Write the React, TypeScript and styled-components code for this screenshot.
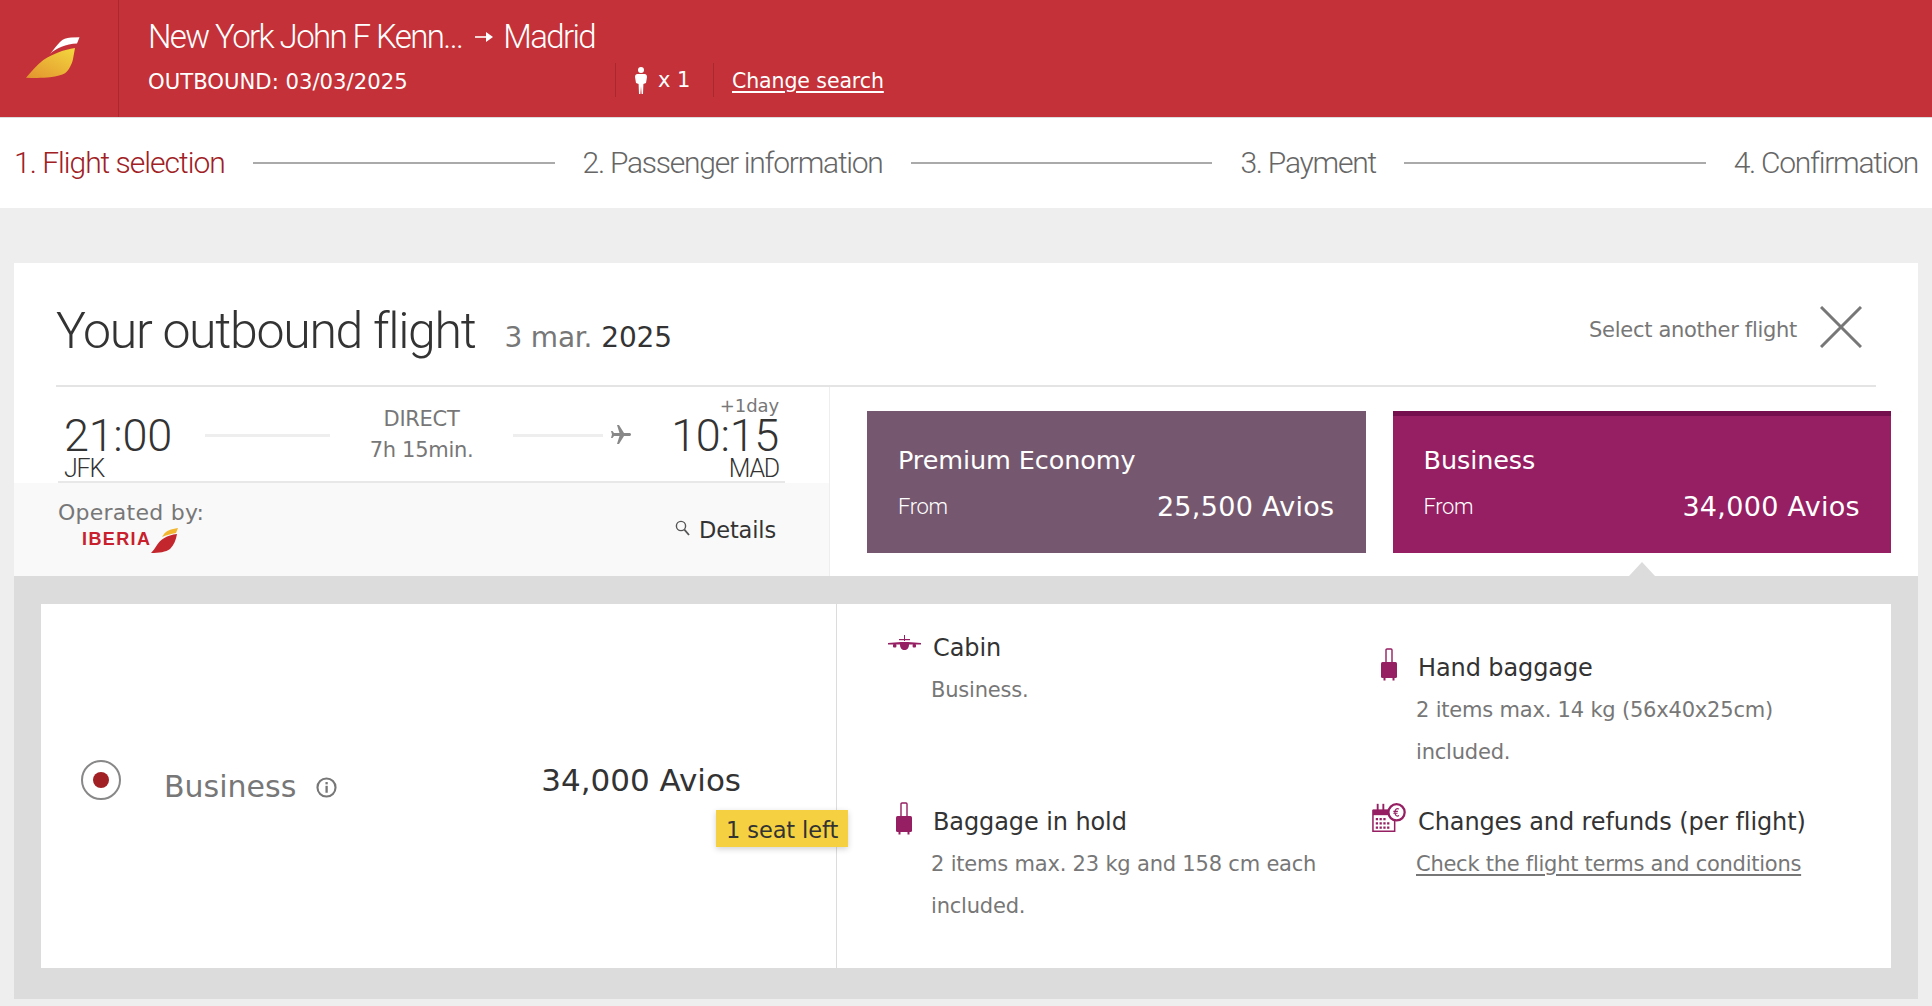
import React from "react";
import styled, { createGlobalStyle } from "styled-components";

const LIGHT = `"Roboto", "Open Sans", sans-serif`;
const VERD = `"DejaVu Sans", "Liberation Sans", sans-serif`;

const Global = createGlobalStyle`
  html, body { margin: 0; padding: 0; background: #eeeeee; }
  body { font-family: ${VERD}; color: #333; height: 1006px; overflow: hidden; }
  * { box-sizing: border-box; }
`;

const Header = styled.header`
  height: 118px;
  background: #c43138;
  display: flex;
  color: #fff;
  box-shadow: inset 0 -1px 0 #ddd;
`;
const LogoCell = styled.div`
  width: 119px;
  flex: none;
  border-right: 1px solid #a8282e;
  margin-bottom: 1px;
  display: flex;
  align-items: center;
  padding: 0 0 1px 26px;
`;
const HeaderInfo = styled.div`
  padding: 18px 0 0 29px;
  display: flex;
  flex-direction: column;
`;
const RouteTitle = styled.div`
  font-family: ${LIGHT};
  font-weight: 300;
  font-size: 33px;
  line-height: 38px;
  letter-spacing: -1.6px;
  white-space: nowrap;
  display: flex;
  align-items: center;
`;
const RouteArrow = styled.svg`
  width: 20px;
  height: 14px;
  margin: 0 9px 0 12px;
`;
const HeaderSub = styled.div`
  display: flex;
  align-items: center;
  margin-top: 8px;
  height: 34px;
`;
const Outbound = styled.div`
  width: 467px;
  font-size: 21.2px;
  white-space: nowrap;
`;
const Pax = styled.div`
  width: 99px;
  height: 34px;
  margin-top: -2px;
  border-left: 1px solid #a8282e;
  border-right: 1px solid #a8282e;
  display: flex;
  align-items: center;
  padding-left: 19px;
  gap: 11px;
  font-size: 21px;
`;
const ChangeLink = styled.a`
  margin-left: 18px;
  font-size: 20.5px;
  letter-spacing: -0.1px;
  color: #fff;
  text-decoration: underline;
  text-underline-offset: 3px;
  white-space: nowrap;
`;

const Steps = styled.nav`
  height: 90px;
  background: #fff;
  display: flex;
  align-items: center;
  padding: 0 14px;
  gap: 28px;
`;
const Step = styled.span<{ $active?: boolean }>`
  font-family: ${LIGHT};
  font-weight: 300;
  font-size: 30px;
  margin-top: -2px;
  letter-spacing: ${(p) => (p.$active ? "-1px" : "-1.25px")};
  white-space: nowrap;
  color: ${(p) => (p.$active ? "#a02024" : "#666")};
`;
const StepLine = styled.span`
  flex: 1;
  height: 2px;
  margin-top: -1px;
  background: #aaa;
`;

const Card = styled.main`
  margin: 55px 14px 0;
  height: 736px;
  background: #fff;
  display: flex;
  flex-direction: column;
`;
const CardHead = styled.div`
  height: 124px;
  margin: 0 42px;
  padding-top: 10px;
  border-bottom: 2px solid #e4e4e4;
  display: flex;
  align-items: center;
`;
const CardTitle = styled.h1`
  margin: 4px 0 0;
  font-family: ${LIGHT};
  font-weight: 300;
  font-size: 50px;
  letter-spacing: -1.3px;
  color: #333;
  white-space: nowrap;
`;
const CardDate = styled.div`
  margin: 17px 0 0 29px;
  font-size: 28px;
  color: #777;
  letter-spacing: -0.2px;
  white-space: nowrap;
  display: flex;
  gap: 9px;
`;
const CardYear = styled.span`
  color: #333;
`;
const SelectOther = styled.div`
  margin-left: auto;
  margin-right: 14px;
  margin-top: 1px;
  display: flex;
  align-items: center;
  gap: 23px;
  font-size: 21px;
  letter-spacing: -0.3px;
  color: #777;
  white-space: nowrap;
`;
const CloseIcon = styled.svg`
  width: 42px;
  height: 42px;
  margin-top: -5px;
`;

const Summary = styled.section`
  display: flex;
  height: 189px;
`;
const FlightCol = styled.div`
  width: 816px;
  flex: none;
  border-right: 1px solid #eee;
  display: flex;
  flex-direction: column;
`;
const FlightRow = styled.div`
  height: 96px;
  margin: 0 44px;
  border-bottom: 2px solid #e8e8e8;
  display: flex;
  padding: 0 6px 0 6px;
  position: relative;
`;
const Time = styled.div`
  font-family: ${LIGHT};
  font-weight: 300;
  font-size: 45px;
  line-height: 46px;
  letter-spacing: -0.3px;
  color: #333;
`;
const Airport = styled.div`
  font-family: ${LIGHT};
  font-weight: 300;
  font-size: 25px;
  line-height: 24px;
  margin-top: -2px;
  letter-spacing: -1.2px;
  color: #333;
`;
const Depart = styled.div`
  width: 141px;
  padding-top: 26px;
  flex: none;
`;
const Arrive = styled.div`
  margin-left: auto;
  text-align: right;
  position: relative;
  padding-top: 26px;
`;
const DayTag = styled.div`
  position: absolute;
  right: 0;
  top: 8px;
  font-size: 18px;
  line-height: 22px;
  letter-spacing: -0.1px;
  color: #777;
  white-space: nowrap;
`;
const Rule = styled.span<{ $w: number }>`
  width: ${(p) => p.$w}px;
  height: 3px;
  margin-top: 47px;
  background: #eee;
  flex: none;
`;
const Direct = styled.div`
  width: 183px;
  flex: none;
  text-align: center;
  font-size: 21px;
  letter-spacing: -0.3px;
  color: #777;
  padding-top: 17px;
  line-height: 31px;
`;
const PlaneSide = styled.svg`
  width: 24px;
  height: 24px;
  margin: 36px 0 0 6px;
  flex: none;
`;
const FlightFoot = styled.div`
  flex: 1;
  background: #f9f9f9;
  display: flex;
  padding: 16px 53px 0 44px;
  justify-content: space-between;
`;
const Operated = styled.div`
  font-size: 22px;
  line-height: 28px;
  letter-spacing: 0.25px;
  color: #777;
`;
const OperatedLogo = styled.div`
  display: flex;
  align-items: center;
  padding-left: 24px;
  height: 26px;
`;
const IberiaWord = styled.span`
  font-family: "Liberation Sans", sans-serif;
  font-weight: 700;
  font-size: 18px;
  letter-spacing: 1.4px;
  color: #c8202c;
  margin-top: -2px;
`;
const Details = styled.div`
  display: flex;
  align-items: center;
  gap: 9px;
  height: 28px;
  margin-top: 17px;
  font-size: 22.5px;
  letter-spacing: -0.15px;
  color: #333;
`;
const DetailsIcon = styled.svg`
  width: 15px;
  height: 16px;
  margin: -4px 0 0 2px;
`;

const Fares = styled.div`
  flex: 1;
  display: flex;
  gap: 27px;
  padding: 24px 27px 0 37px;
`;
const Fare = styled.div<{ $bg: string; $top?: string }>`
  flex: 1;
  height: 142px;
  background: ${(p) => p.$bg};
  border-top: 5px solid ${(p) => p.$top ?? p.$bg};
  color: #fff;
  padding: 29px 31px 0 31px;
  position: relative;
`;
const FareName = styled.div`
  font-size: 25.5px;
  line-height: 30px;
  letter-spacing: -0.1px;
`;
const FareLine = styled.div`
  display: flex;
  justify-content: space-between;
  align-items: center;
  margin-top: 16px;
`;
const FareFrom = styled.span`
  font-family: ${LIGHT};
  font-weight: 300;
  font-size: 22px;
  letter-spacing: -0.4px;
`;
const FarePrice = styled.span`
  font-size: 27px;
  letter-spacing: 0.3px;
`;
const Notch = styled.span`
  position: absolute;
  left: 50%;
  margin-left: -13px;
  bottom: -23px;
  width: 0;
  height: 0;
  border-left: 13px solid transparent;
  border-right: 13px solid transparent;
  border-bottom: 14px solid #dcdcdc;
`;

const Panel = styled.section`
  flex: 1;
  background: #dcdcdc;
  padding: 28px 27px 31px 27px;
  display: flex;
`;
const PanelInner = styled.div`
  flex: 1;
  background: #fff;
  display: flex;
`;
const Choice = styled.div`
  width: 796px;
  flex: none;
  border-right: 1px solid #dcdcdc;
  position: relative;
  display: flex;
  align-items: flex-start;
  padding: 156px 0 0 40px;
`;
const Radio = styled.span`
  width: 40px;
  height: 40px;
  border-radius: 50%;
  border: 2px solid #888;
  display: flex;
  align-items: center;
  justify-content: center;
  flex: none;
`;
const RadioDot = styled.span`
  width: 16px;
  height: 16px;
  border-radius: 50%;
  background: #a02024;
`;
const ChoiceName = styled.span`
  margin: 9px 0 0 43px;
  font-size: 30px;
  line-height: 36px;
  color: #777;
`;
const InfoIcon = styled.svg`
  width: 21px;
  height: 21px;
  margin: 17px 0 0 20px;
  flex: none;
`;
const ChoicePrice = styled.span`
  margin-left: auto;
  margin-right: 95px;
  margin-top: 2px;
  font-size: 31px;
  line-height: 36px;
  color: #333;
`;
const Seats = styled.span`
  position: absolute;
  left: 675px;
  top: 206px;
  width: 132px;
  height: 37px;
  background: #f5d142;
  box-shadow: 0 2px 6px rgba(0, 0, 0, 0.18);
  font-size: 22.5px;
  line-height: 40px;
  padding-left: 10px;
  letter-spacing: -0.1px;
  color: #333;
  white-space: nowrap;
  z-index: 1;
`;
const Features = styled.div`
  flex: 1;
  display: grid;
  grid-template-columns: 485px 1fr;
  grid-template-rows: 174px 1fr;
  padding: 30px 0 0 50px;
`;
const Feature = styled.div<{ $drop?: number }>`
  display: grid;
  grid-template-columns: 46px 1fr;
  align-content: start;
  margin-top: ${(p) => p.$drop ?? 0}px;
`;
const FeatureIcon = styled.div<{ $lift?: number }>`
  height: 28px;
  display: flex;
  align-items: flex-end;
  justify-content: center;
  padding-right: 12px;
  padding-bottom: ${(p) => p.$lift ?? 1}px;
`;
const FeatureName = styled.div`
  font-size: 24px;
  line-height: 28px;
  letter-spacing: -0.1px;
  color: #333;
  white-space: nowrap;
`;
const FeatureDesc = styled.div`
  grid-column: 2;
  margin-top: 8px;
  margin-left: -2px;
  font-size: 21px;
  line-height: 41.5px;
  letter-spacing: -0.2px;
  color: #777;
  white-space: nowrap;
`;
const FeatureLink = styled.a`
  color: #777;
  letter-spacing: -0.26px;
  text-decoration: underline;
  text-underline-offset: 3px;
`;

const Wing = () => (
  <svg width="54" height="42" viewBox="0 0 54 42" aria-hidden="true">
    <defs>
      <linearGradient id="wingGrad" x1="0.95" y1="0" x2="0.1" y2="1">
        <stop offset="0" stopColor="#f3d63e" />
        <stop offset="1" stopColor="#e3962f" />
      </linearGradient>
    </defs>
    <path d="M53.5 0.3 L51 6.5 C 40 7 30 11 24 17 C 28 12 31 8 34 5 C 37 2 40 1 45 0.6 Z" fill="#fff" />
    <path d="M49 11 C 38 12.5 27 17 17.3 23 C 11 28 5 35 0 40.7 C 10 41 18 41 24 40.3 C 31 39.5 36 38 39 36.3 C 43 33 46 27 47 22 Z" fill="url(#wingGrad)" />
  </svg>
);

const SmallWing = () => (
  <svg width="28" height="25" viewBox="0 0 28 25" aria-hidden="true">
    <path d="M27 0 C 20 1 15 3 13 6 L 11 9 C 15 7 20 6 25 5 Z" fill="#f2b62f" />
    <path d="M26 6 C 16 7 9 12 6 17 C 4 20 2 23 0 25 C 8 25 15 24 19 21 C 23 17 25 12 26 6 Z" fill="#c4262e" />
  </svg>
);

const Person = () => (
  <svg width="12" height="27" viewBox="0 0 12 27" aria-hidden="true">
    <circle cx="6" cy="3" r="3" fill="#fff" />
    <path d="M2.5 7 H9.5 C11 7 12 8 12 10 L11 16 L8.4 17 L8 27 H6.6 L6 19 L5.4 27 H4 L3.6 17 L1 16 L0 10 C0 8 1 7 2.5 7 Z" fill="#fff" />
  </svg>
);

const Suitcase = () => (
  <svg width="18" height="33" viewBox="0 0 18 33" aria-hidden="true">
    <path d="M6 15 V2 Q6 1 7 1 H11 Q12 1 12 2 V15" fill="none" stroke="#951f62" strokeWidth="1.4" />
    <rect x="1" y="14" width="16" height="16" rx="1.5" fill="#951f62" />
    <rect x="3.5" y="30" width="2" height="2.5" fill="#951f62" />
    <rect x="12.5" y="30" width="2" height="2.5" fill="#951f62" />
  </svg>
);

const PlaneFront = () => (
  <svg width="33" height="16" viewBox="0 0 33 16" aria-hidden="true" fill="#951f62">
    <rect x="16" y="0" width="1" height="6" />
    <rect x="11" y="4" width="11" height="1.2" />
    <path d="M0 8 L13 7 H20 L33 8 V9.4 L21 9.4 C 21 13 19 15 16.5 15 C 14 15 12 13 12 9.4 L0 9.4 Z" />
    <rect x="5" y="9" width="3.4" height="3.6" rx="1" />
    <rect x="24.6" y="9" width="3.4" height="3.6" rx="1" />
  </svg>
);

const CalendarEuro = () => (
  <svg width="36" height="30" viewBox="0 0 36 30" aria-hidden="true">
    <path d="M1 7 H24 V29 H1 Z" fill="#fff" stroke="#951f62" strokeWidth="1.6" />
    <rect x="1" y="6" width="23" height="6" fill="#951f62" />
    <rect x="5" y="0" width="2" height="7" fill="#951f62" />
    <rect x="11" y="0" width="2" height="7" fill="#951f62" />
    <g fill="#951f62">
      <rect x="4" y="15" width="2.4" height="2.4" />
      <rect x="8" y="15" width="2.4" height="2.4" />
      <rect x="12" y="15" width="2.4" height="2.4" />
      <rect x="4" y="19.5" width="2.4" height="2.4" />
      <rect x="8" y="19.5" width="2.4" height="2.4" />
      <rect x="12" y="19.5" width="2.4" height="2.4" />
      <rect x="16" y="19.5" width="2.4" height="2.4" />
      <rect x="4" y="24" width="2.4" height="2.4" />
      <rect x="8" y="24" width="2.4" height="2.4" />
      <rect x="12" y="24" width="2.4" height="2.4" />
      <rect x="16" y="24" width="2.4" height="2.4" />
    </g>
    <circle cx="26" cy="9" r="8.6" fill="#fff" stroke="#951f62" strokeWidth="2.4" />
    <path d="M28.6 5.6 C 26.4 4.2 24.4 5.6 24.2 9 C 24.4 12.4 26.4 13.8 28.6 12.4 M22.6 8 H27.4 M22.6 10 H27" fill="none" stroke="#951f62" strokeWidth="1.2" />
  </svg>
);

export default function App() {
  return (
    <>
      <Global />
      <Header>
        <LogoCell>
          <Wing />
        </LogoCell>
        <HeaderInfo>
          <RouteTitle>
            New York John F Kenn...
            <RouteArrow viewBox="0 0 20 14" aria-hidden="true">
              <path d="M1 7 H15" stroke="#fff" strokeWidth="1.6" fill="none" />
              <path d="M12 2 L19 7 L12 12 Z" fill="#fff" />
            </RouteArrow>
            Madrid
          </RouteTitle>
          <HeaderSub>
            <Outbound>OUTBOUND: 03/03/2025</Outbound>
            <Pax>
              <Person />
              <span>x 1</span>
            </Pax>
            <ChangeLink href="#">Change search</ChangeLink>
          </HeaderSub>
        </HeaderInfo>
      </Header>

      <Steps>
        <Step $active>1. Flight selection</Step>
        <StepLine />
        <Step>2. Passenger information</Step>
        <StepLine />
        <Step>3. Payment</Step>
        <StepLine />
        <Step>4. Confirmation</Step>
      </Steps>

      <Card>
        <CardHead>
          <CardTitle>Your outbound flight</CardTitle>
          <CardDate>
            <span>3 mar.</span>
            <CardYear>2025</CardYear>
          </CardDate>
          <SelectOther>
            <span>Select another flight</span>
            <CloseIcon viewBox="0 0 42 42" aria-hidden="true">
              <path d="M1 1 L41 41 M41 1 L1 41" stroke="#777" strokeWidth="3" fill="none" />
            </CloseIcon>
          </SelectOther>
        </CardHead>

        <Summary>
          <FlightCol>
            <FlightRow>
              <Depart>
                <Time>21:00</Time>
                <Airport>JFK</Airport>
              </Depart>
              <Rule $w={125} />
              <Direct>
                DIRECT
                <br />
                7h 15min.
              </Direct>
              <Rule $w={90} />
              <PlaneSide viewBox="0 0 24 24" aria-hidden="true">
                <path
                  transform="rotate(90 12 12)"
                  d="M21 16v-2l-8-5V3.5c0-.83-.67-1.5-1.5-1.5S10 2.67 10 3.5V9l-8 5v2l8-2.5V19l-2 1.5V22l3.5-1 3.5 1v-1.5L13 19v-5.5l8 2.5z"
                  fill="#888"
                />
              </PlaneSide>
              <Arrive>
                <DayTag>+1day</DayTag>
                <Time>10:15</Time>
                <Airport>MAD</Airport>
              </Arrive>
            </FlightRow>
            <FlightFoot>
              <Operated>
                Operated by:
                <OperatedLogo>
                  <IberiaWord>IBERIA</IberiaWord>
                  <SmallWing />
                </OperatedLogo>
              </Operated>
              <Details>
                <DetailsIcon viewBox="0 0 15 16" aria-hidden="true">
                  <circle cx="6" cy="6" r="4.6" fill="none" stroke="#555" strokeWidth="1.4" />
                  <path d="M9.4 9.6 L14 15" stroke="#555" strokeWidth="1.8" />
                </DetailsIcon>
                Details
              </Details>
            </FlightFoot>
          </FlightCol>
          <Fares>
            <Fare $bg="#755870">
              <FareName>Premium Economy</FareName>
              <FareLine>
                <FareFrom>From</FareFrom>
                <FarePrice>25,500 Avios</FarePrice>
              </FareLine>
            </Fare>
            <Fare $bg="#951f62" $top="#750f4d">
              <FareName>Business</FareName>
              <FareLine>
                <FareFrom>From</FareFrom>
                <FarePrice>34,000 Avios</FarePrice>
              </FareLine>
              <Notch />
            </Fare>
          </Fares>
        </Summary>

        <Panel>
          <PanelInner>
            <Choice>
              <Radio>
                <RadioDot />
              </Radio>
              <ChoiceName>Business</ChoiceName>
              <InfoIcon viewBox="0 0 20 20" aria-hidden="true">
                <circle cx="10" cy="10" r="8.6" fill="none" stroke="#777" strokeWidth="2" />
                <rect x="9" y="8.4" width="2.2" height="6.6" fill="#777" />
                <rect x="9" y="4.8" width="2.2" height="2.2" fill="#777" />
              </InfoIcon>
              <ChoicePrice>34,000 Avios</ChoicePrice>
              <Seats>1 seat left</Seats>
            </Choice>
            <Features>
              <Feature>
                <FeatureIcon $lift={11}>
                  <PlaneFront />
                </FeatureIcon>
                <FeatureName>Cabin</FeatureName>
                <FeatureDesc>Business.</FeatureDesc>
              </Feature>
              <Feature $drop={20}>
                <FeatureIcon>
                  <Suitcase />
                </FeatureIcon>
                <FeatureName>Hand baggage</FeatureName>
                <FeatureDesc>
                  2 items max. 14 kg (56x40x25cm)
                  <br />
                  included.
                </FeatureDesc>
              </Feature>
              <Feature>
                <FeatureIcon>
                  <Suitcase />
                </FeatureIcon>
                <FeatureName>Baggage in hold</FeatureName>
                <FeatureDesc>
                  2 items max. 23 kg and 158 cm each
                  <br />
                  included.
                </FeatureDesc>
              </Feature>
              <Feature>
                <FeatureIcon $lift={3}>
                  <CalendarEuro />
                </FeatureIcon>
                <FeatureName>Changes and refunds (per flight)</FeatureName>
                <FeatureDesc>
                  <FeatureLink href="#">Check the flight terms and conditions</FeatureLink>
                </FeatureDesc>
              </Feature>
            </Features>
          </PanelInner>
        </Panel>
      </Card>
    </>
  );
}
